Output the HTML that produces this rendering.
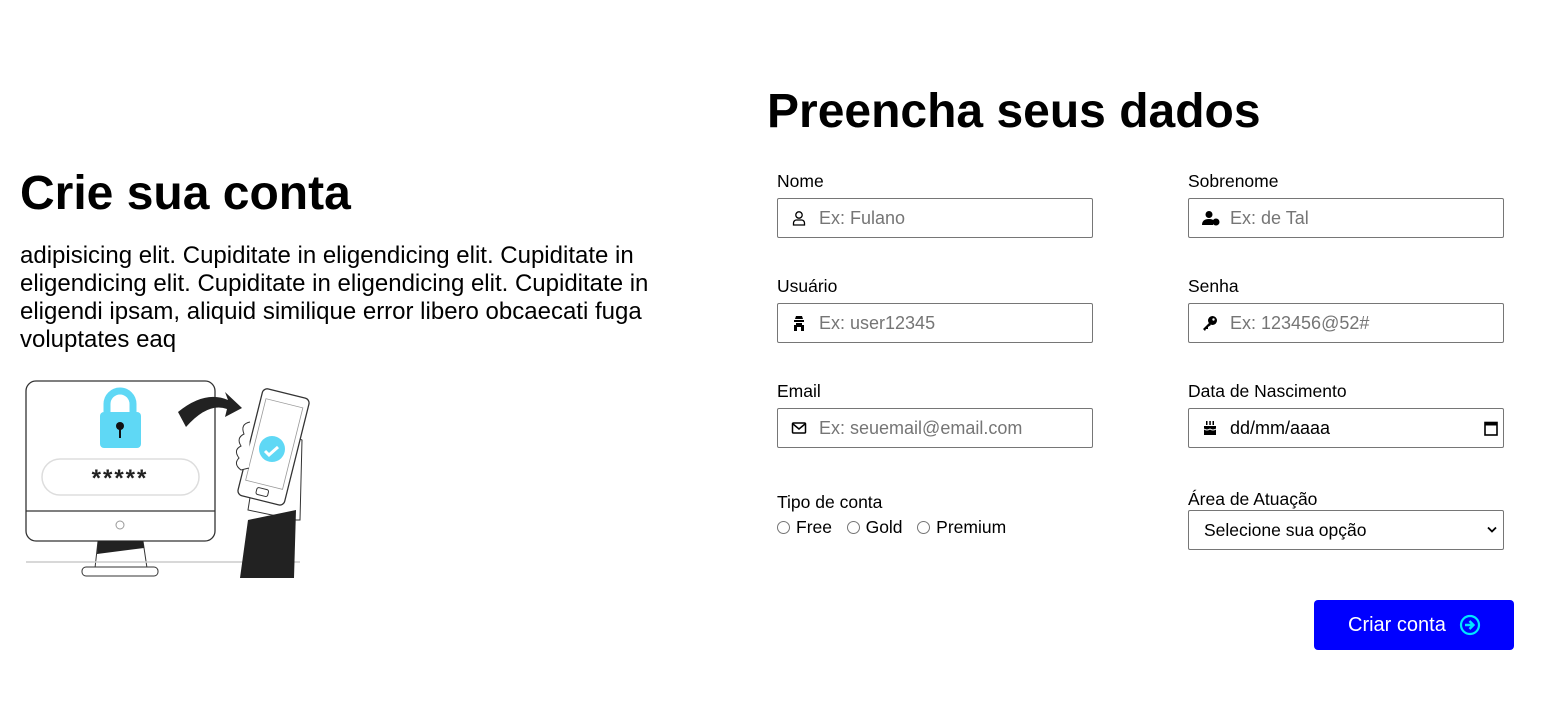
<!DOCTYPE html>
<html><head><meta charset="utf-8"><style>
*{box-sizing:border-box;margin:0;padding:0}
body{width:1541px;height:715px;background:#fff;font-family:"Liberation Sans",Arial,sans-serif;color:#000;position:relative;overflow:hidden}
.a{position:absolute}
h1{font-size:48px;font-weight:bold;position:absolute;white-space:nowrap}
.lbl{position:absolute;font-size:17.5px}
.inp{position:absolute;width:316px;height:40px;border:1px solid #767676;border-radius:2px;font-size:18px;color:#757575;padding-left:41px;line-height:38px}
.inp svg{position:absolute;left:13px;top:11px}
.p{font-size:24px;line-height:28px;position:absolute;left:20px;top:242px;width:675px}
.r{display:inline-block;width:13px;height:13px;border:1px solid #767676;border-radius:50%;vertical-align:-1px;margin-right:6px}
</style></head><body>
<h1 style="left:20px;top:166px">Crie sua conta</h1>
<div class="p">adipisicing elit. Cupiditate in eligendicing elit. Cupiditate in eligendicing elit. Cupiditate in eligendicing elit. Cupiditate in eligendi ipsam, aliquid similique error libero obcaecati fuga voluptates eaq</div>
<svg class="a" style="left:20px;top:370px" width="300" height="215" viewBox="0 0 300 215">
<rect x="6" y="11" width="189" height="160" rx="10" fill="#fff" stroke="#333" stroke-width="1.3"/>
<line x1="6" y1="141" x2="195" y2="141" stroke="#333" stroke-width="1.3"/>
<circle cx="100" cy="155" r="4" fill="none" stroke="#999"/>
<path d="M78 171 L75 198 L127 198 L123 171Z" fill="#fff" stroke="#333"/>
<path d="M78 171 L123 171 L124 178 L77 184Z" fill="#222"/>
<rect x="62" y="197" width="76" height="9" rx="4" fill="#fff" stroke="#333"/>
<line x1="6" y1="192" x2="280" y2="192" stroke="#ccc" stroke-width="1.5"/>
<path d="M87 42 v-8 a13 13 0 0 1 26 0 v8" fill="none" stroke="#5fd8f5" stroke-width="7"/>
<rect x="80" y="42" width="41" height="36" rx="4" fill="#5fd8f5"/>
<circle cx="100" cy="56" r="4" fill="#111"/><rect x="99" y="56" width="2" height="12" fill="#111"/>
<rect x="22" y="89" width="157" height="36" rx="18" fill="#fff" stroke="#ddd" stroke-width="1.5"/>
<text x="100" y="116" text-anchor="middle" font-size="24" font-weight="bold" letter-spacing="2" fill="#222">*****</text>
<path d="M158 42 Q185 20 208 30 L205 22 L222 38 L205 47 L207 39 Q188 32 166 57Z" fill="#222"/>
<path d="M228 140 L236 90 L262 60 L282 70 L280 150 L276 150Z" fill="#fff" stroke="#333"/>
<g transform="rotate(14 254 75)"><rect x="230" y="22" width="48" height="110" rx="5" fill="#fff" stroke="#333" stroke-width="1.3"/><rect x="235" y="32" width="38" height="84" fill="none" stroke="#999" stroke-width=".8"/><rect x="248" y="120" width="12" height="7" rx="2" fill="none" stroke="#333"/></g>
<path d="M230 52 q-10 2 -6 12 q-8 4 -3 12 q-8 4 -2 12 q-6 6 2 12 l8 -2" fill="#fff" stroke="#333"/>
<circle cx="252" cy="79" r="13" fill="#5fd8f5"/>
<path d="M245 81 l4 4 l9 -8" fill="none" stroke="#fff" stroke-width="3"/>
<path d="M228 150 L276 140 L274 208 L220 208Z" fill="#222"/>
</svg>

<h1 style="left:767px;top:84px">Preencha seus dados</h1>

<div class="lbl" style="left:777px;top:171px">Nome</div>
<div class="inp" style="left:777px;top:198px"><svg width="16" height="16" viewBox="0 0 16 16"><circle cx="8" cy="5" r="3.2" fill="none" stroke="#000" stroke-width="1.3"/><path d="M2.5 15 v-2 a3 3 0 0 1 3-3 h5 a3 3 0 0 1 3 3 v2z" fill="none" stroke="#000" stroke-width="1.3"/></svg>Ex: Fulano</div>
<div class="lbl" style="left:1188px;top:171px">Sobrenome</div>
<div class="inp" style="left:1188px;top:198px"><svg width="18" height="16" viewBox="0 0 18 16"><circle cx="7" cy="4.5" r="3.5"/><path d="M0 15 q0-6 7-6 q4 0 5 2 l-1 4z"/><circle cx="14" cy="12" r="3.5"/></svg>Ex: de Tal</div>

<div class="lbl" style="left:777px;top:276px">Usuário</div>
<div class="inp" style="left:777px;top:303px"><svg width="16" height="16" viewBox="0 0 16 16"><path d="M5 1h6l1 3H4z M3 5h10v2H3z M5 8h6v2H5z M3 10h10v6H3z"/><rect x="6" y="12" width="4" height="4" fill="#fff"/></svg>Ex: user12345</div>
<div class="lbl" style="left:1188px;top:276px">Senha</div>
<div class="inp" style="left:1188px;top:303px"><svg width="16" height="16" viewBox="0 0 16 16"><circle cx="10.5" cy="5.5" r="4.5"/><path d="M7 8 L1 14 L3 16 L4 14 L6 14 L6 12 L9 10z"/><circle cx="11.5" cy="4.5" r="1.2" fill="#fff"/></svg>Ex: 123456@52#</div>

<div class="lbl" style="left:777px;top:381px">Email</div>
<div class="inp" style="left:777px;top:408px"><svg width="16" height="16" viewBox="0 0 16 16"><rect x="1.5" y="3" width="13" height="10" rx="1" fill="none" stroke="#000" stroke-width="1.5"/><path d="M2 4l6 5 6-5" fill="none" stroke="#000" stroke-width="1.5"/></svg>Ex: seuemail@email.com</div>
<div class="lbl" style="left:1188px;top:381px">Data de Nascimento</div>
<div class="inp" style="left:1188px;top:408px;color:#000"><svg width="16" height="16" viewBox="0 0 16 16"><rect x="4" y="1" width="1.5" height="4"/><rect x="7.3" y="1" width="1.5" height="4"/><rect x="10.5" y="1" width="1.5" height="4"/><rect x="2" y="6" width="12" height="9"/><path d="M2 9 q3 2 6 0 q3 2 6 0" stroke="#fff" fill="none"/></svg>dd/mm/aaaa
<svg style="left:295px;top:11px" width="14" height="16" viewBox="0 0 14 16"><rect x="1" y="2.5" width="12" height="12.5" fill="none" stroke="#000" stroke-width="1.6"/><rect x="1" y="2.5" width="12" height="3"/></svg></div>

<div class="lbl" style="left:777px;top:492px">Tipo de conta</div>
<div class="lbl" style="left:777px;top:517px"><span class="r"></span>Free &nbsp;&nbsp;<span class="r"></span>Gold &nbsp;&nbsp;<span class="r"></span>Premium</div>
<div class="lbl" style="left:1188px;top:489px">Área de Atuação</div>
<div class="inp" style="left:1188px;top:510px;color:#000;padding-left:15px;font-size:17.5px">Selecione sua opção
<svg style="left:298px;top:15px" width="10" height="8" viewBox="0 0 10 8"><path d="M1 1.5l4 4 4-4" fill="none" stroke="#000" stroke-width="1.8"/></svg></div>

<div class="a" style="left:1314px;top:600px;width:200px;height:50px;background:#0000ff;border-radius:4px;color:#fff;font-size:20px;line-height:50px;padding-left:34px">Criar conta
<svg class="a" style="left:145px;top:14px" width="22" height="22" viewBox="0 0 22 22"><circle cx="11" cy="11" r="9" fill="none" stroke="#00e5ff" stroke-width="2.2"/><path d="M6 11h8 M10.5 7l4 4-4 4" fill="none" stroke="#00e5ff" stroke-width="2.4"/></svg></div>
</body></html>
